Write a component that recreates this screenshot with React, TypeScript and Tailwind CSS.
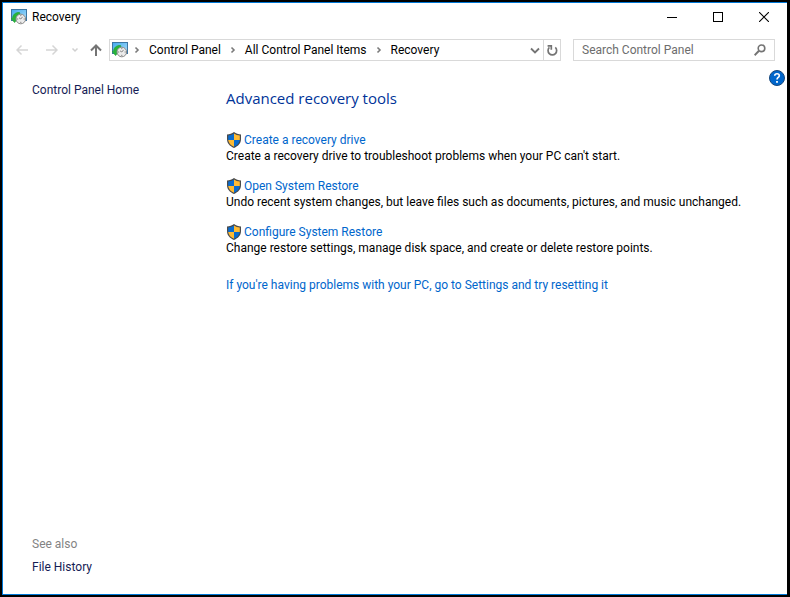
import React, { useState } from 'react';

const RecoveryIcon = () => (
  <svg className="h-4 w-4 shrink-0" viewBox="0 0 16 16" aria-hidden="true">
    <defs>
      <linearGradient id="screen" x1="0" y1="0" x2="1" y2="1">
        <stop offset="0" stopColor="#3fa9ee" />
        <stop offset="1" stopColor="#b0e0fb" />
      </linearGradient>
    </defs>
    <rect x="0.5" y="0.5" width="15" height="11" fill="url(#screen)" stroke="#3c76a3" />
    <path d="M8.500 3.500C4 3.300 1.600 6 1.600 9.500H0.200L3.600 13.500 6.500 9.500H5C5 7.500 6.200 6 9 5.800z" fill="#27b53a" stroke="#27a53a" strokeWidth="0.8" />
    <circle cx="9.800" cy="10" r="4.800" fill="#ececec" stroke="#8a8a8a" />
    <path d="M9.800 6v1.200M9.800 12.800V14M6 10h1.200M12.600 10h1.200M9.800 10l1.800-2.200M9.800 10L8 8.800" stroke="#777" strokeWidth="0.9" />
  </svg>
);

const ShieldIcon = () => (
  <svg className="h-4 w-4 shrink-0" viewBox="0 0 16 16" aria-hidden="true">
    <path d="M8 0C6 1.600 3.600 2.300 1 2.400V7c0 4.200 2.600 7 7 9 4.400-2 7-4.800 7-9V2.400C12.400 2.300 10 1.600 8 0z" fill="#4a4a4a" />
    <path d="M8 1.400C6.300 2.600 4.400 3.300 2.200 3.500V8H8z" fill="#0a6ccf" />
    <path d="M8 1.400C9.700 2.600 11.600 3.300 13.800 3.500V8H8z" fill="#ffbb33" />
    <path d="M2.200 8C2.600 11 4.500 13.200 8 14.800V8z" fill="#ffbb33" />
    <path d="M13.800 8C13.400 11 11.500 13.200 8 14.800V8z" fill="#0a6ccf" />
  </svg>
);

const Chevron = () => (
  <svg className="h-2 w-2 shrink-0" viewBox="0 0 8 8" fill="none" stroke="#7a7a7a" strokeWidth="1.6" aria-hidden="true">
    <path d="M2.500 1.500L5 4 2.500 6.500" />
  </svg>
);

const tools = [
  {
    title: 'Create a recovery drive',
    description: "Create a recovery drive to troubleshoot problems when your PC can't start."
  },
  {
    title: 'Open System Restore',
    description: 'Undo recent system changes, but leave files such as documents, pictures, and music unchanged.'
  },
  {
    title: 'Configure System Restore',
    description: 'Change restore settings, manage disk space, and create or delete restore points.'
  }
];

const App = () => {
  const [query, setQuery] = useState('');

  return (
    <div className="flex min-h-screen flex-col bg-black pt-[2px] pr-[3px] pb-[2px] pl-[2px] font-['Roboto','Open_Sans',sans-serif] text-[12px] leading-4 text-black">
      <div className="flex flex-1 flex-col border-t border-b border-l border-[#0078d7] bg-white">
        {/* Title bar */}
        <header className="flex h-7 items-center pl-2">
          <RecoveryIcon />
          <h1 className="ml-[5px] flex-1">Recovery</h1>
          <button aria-label="Minimize" className="flex h-7 w-[46px] items-center justify-center">
            <svg className="h-[10px] w-[10px]" viewBox="0 0 10 10" stroke="#000"><path d="M0 5.500h10" /></svg>
          </button>
          <button aria-label="Maximize" className="flex h-7 w-[46px] items-center justify-center">
            <svg className="h-[10px] w-[10px]" viewBox="0 0 10 10" fill="none" stroke="#000"><rect x="0.5" y="0.5" width="9" height="9" /></svg>
          </button>
          <button aria-label="Close" className="flex h-7 w-[46px] items-center justify-center">
            <svg className="h-[10px] w-[10px]" viewBox="0 0 10 10" stroke="#000" strokeWidth="1.1"><path d="M0 0l10 10M10 0L0 10" /></svg>
          </button>
        </header>

        {/* Navigation */}
        <div className="mt-2 flex items-center pr-3">
          <nav className="flex items-center pl-3" aria-label="History">
            <button aria-label="Back" className="flex w-[14px] justify-center">
              <svg className="h-3 w-3 shrink-0" viewBox="0 0 12 12" fill="none" stroke="#d5d5d5" strokeWidth="1.5"><path d="M12 6H1M5.500 1.500L1 6l4.500 4.500" /></svg>
            </button>
            <button aria-label="Forward" className="ml-4 flex w-[14px] justify-center">
              <svg className="h-3 w-3 shrink-0" viewBox="0 0 12 12" fill="none" stroke="#d5d5d5" strokeWidth="1.5"><path d="M0 6h11M6.500 1.500L11 6l-4.500 4.500" /></svg>
            </button>
            <button aria-label="Recent locations" className="ml-3 flex w-2 justify-center">
              <svg className="h-2 w-2 shrink-0" viewBox="0 0 8 8" fill="none" stroke="#d0d0d0" strokeWidth="1.5"><path d="M1.500 2.500L4 5l2.500-2.500" /></svg>
            </button>
            <button aria-label="Up" className="mr-[7px] ml-[11px] flex w-3 justify-center">
              <svg className="h-3 w-3 shrink-0" viewBox="0 0 12 12" fill="none" stroke="#747474" strokeWidth="2"><path d="M6 12V1.500M1 6.500l5-5 5 5" /></svg>
            </button>
          </nav>

          <div className="flex h-[22px] min-w-0 flex-1 items-center border border-[#d9d9d9] pl-[2px]">
            <RecoveryIcon />
            <div className="ml-[5px] flex flex-1 items-center gap-2 whitespace-nowrap">
              <Chevron />
              <button>Control Panel</button>
              <Chevron />
              <button>All Control Panel Items</button>
              <Chevron />
              <button>Recovery</button>
            </div>
            <button aria-label="Previous locations" className="flex w-4 items-center justify-center">
              <svg className="h-[10px] w-[10px] shrink-0" viewBox="0 0 10 10" fill="none" stroke="#747474" strokeWidth="1.8"><path d="M1 3.500l4 4 4-4" /></svg>
            </button>
            <button aria-label="Refresh" className="flex h-full w-[17px] items-center justify-center border-l border-[#d9d9d9]">
              <svg className="h-3 w-3 shrink-0" viewBox="0 0 12 12" fill="none" stroke="#747474" strokeWidth="1.7"><path d="M9.300 3.400A4.300 4.300 0 1 1 3.400 3.400M1.600 1.800H5.300V5.800" /></svg>
            </button>
          </div>

          <div className="ml-3 flex h-[22px] w-[202px] items-center border border-[#d9d9d9] px-2">
            <input
              type="text"
              aria-label="Search Control Panel"
              placeholder="Search Control Panel"
              value={query}
              onChange={e => setQuery(e.target.value)}
              className="min-w-0 flex-1 outline-none placeholder:text-[#6d6d6d]"
            />
            <svg className="h-3 w-3 shrink-0" viewBox="0 0 12 12" fill="none" stroke="#747474" strokeWidth="1.6" aria-hidden="true">
              <circle cx="7.500" cy="4.300" r="3.300" />
              <path d="M5 6.800L0.600 11.200" strokeWidth="2" />
            </svg>
          </div>
        </div>

        <div className="flex flex-1">
          {/* Sidebar */}
          <aside className="flex w-[223px] shrink-0 flex-col justify-between pt-[21px] pb-[19px] pl-[29px] text-[#151c55]">
            <a href="#home">Control Panel Home</a>
            <div className="flex flex-col gap-[7px]">
              <h2 className="text-[#838383]">See also</h2>
              <a href="#file-history">File History</a>
            </div>
          </aside>

          {/* Recovery tools */}
          <main className="min-w-0 flex-1 pt-[25px]">
            <h2 className="font-['Open_Sans',sans-serif] text-[15px] leading-6 text-[#003399]">Advanced recovery tools</h2>
            <ul className="mt-[22px] flex flex-col gap-[14px]">
              {tools.map(tool => (
                <li key={tool.title}>
                  <a href="#tool" className="flex items-center gap-[2px] text-[#0066cc]">
                    <ShieldIcon />
                    {tool.title}
                  </a>
                  <p className="whitespace-nowrap">{tool.description}</p>
                </li>
              ))}
            </ul>
            <a href="#reset" className="mt-[21px] block text-[#0066cc]">
              If you're having problems with your PC, go to Settings and try resetting it
            </a>
          </main>

          <div className="pt-[9px] pr-[2px]">
            <button aria-label="Help" className="block h-4 w-4">
              <svg className="h-4 w-4" viewBox="0 0 16 16" fill="none">
                <circle cx="8" cy="8" r="7.500" fill="#0066cc" stroke="#16477c" />
                <path d="M5.700 5.800C5.800 4.400 6.700 3.700 8 3.700s2.300.8 2.300 2C10.300 7.500 8 7.400 8 9.600" stroke="#fff" strokeWidth="1.600" />
                <rect x="7.100" y="11" width="1.800" height="1.800" fill="#fff" />
              </svg>
            </button>
          </div>
        </div>
      </div>
    </div>
  );
};

export default App;
